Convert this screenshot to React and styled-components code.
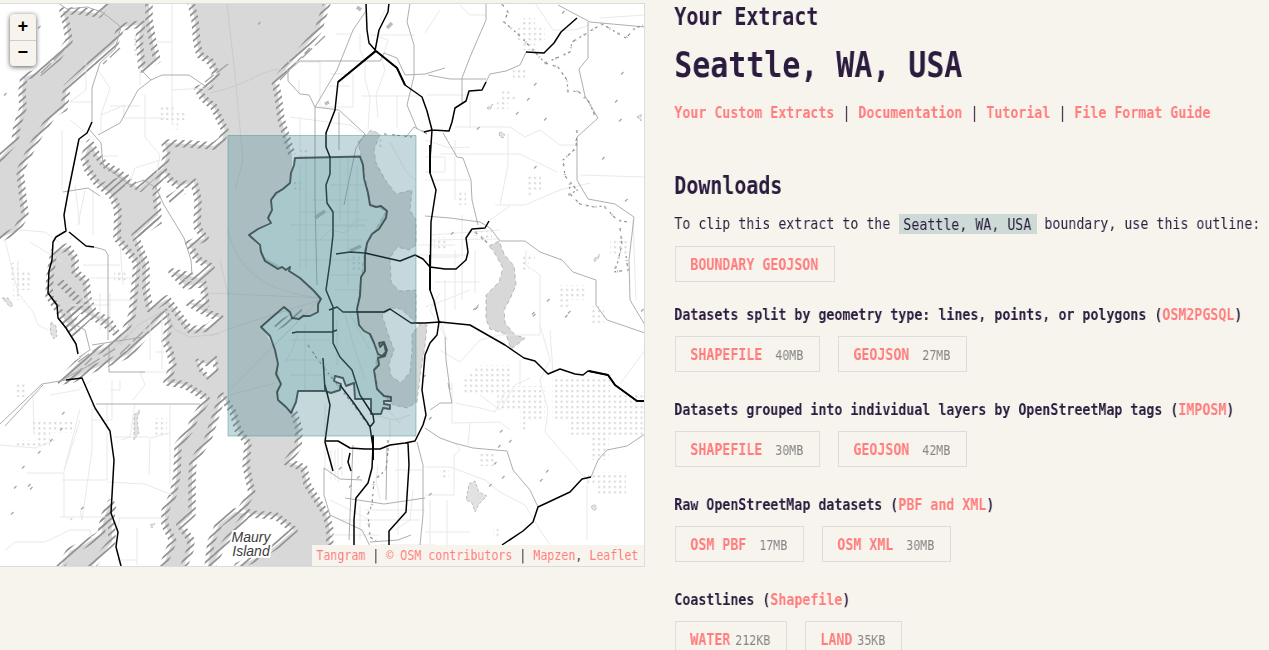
import React from 'react';
import styled, { createGlobalStyle } from 'styled-components';

const ink = '#2b1c3f';
const coral = '#ff7d7d';
const paper = '#f7f4ed';
const rule = '#dcdcdc';

const GlobalStyle = createGlobalStyle`
  html, body { margin: 0; height: 100%; overflow: hidden; }
  body { background: ${paper}; color: ${ink}; font-family: "DejaVu Sans Mono", "Liberation Mono", monospace; }
`;

/* Condensed monospace: every character is half an em wide. */
const Cell = styled.span`
  display: inline-block;
  vertical-align: baseline;
  white-space: pre;
  font-size: ${p => p.$size}px;
  width: ${p => (p.$chars * p.$size) / 2}px;
`;
const Squeeze = styled.span`
  display: inline-block;
  transform: translateX(-0.7px) scaleX(0.8306);
  transform-origin: 0 50%;
  will-change: transform;
`;
const Text = ({ size = 16, children, ...rest }) => (
  <Cell $size={size} $chars={children.length} {...rest}><Squeeze>{children}</Squeeze></Cell>
);

const Page = styled.main`
  display: grid;
  grid-template-columns: 645px 1fr;
  column-gap: 30px;
  height: 650px;
  overflow: hidden;
`;
const MapPanel = styled.section`
  position: relative;
  box-sizing: border-box;
  margin-top: 3px;
  width: 645px;
  height: 564px;
  border: 1px solid ${rule};
  border-left: 0;
  background: #fff;
  svg { display: block; }
`;
const ZoomBar = styled.div`
  position: absolute;
  top: 10px;
  left: 10px;
  width: 26px;
  border-radius: 4px;
  background: ${paper};
  box-shadow: 0 1px 5px rgba(0, 0, 0, 0.65);
`;
const ZoomButton = styled.button`
  display: block;
  width: 26px;
  height: 26px;
  padding: 0;
  border: 0;
  background: none;
  color: #000;
  font: bold 18px/26px "Liberation Mono", monospace;
  & + & { border-top: 1px solid #ccc; height: 26px; line-height: 25px; }
`;
const Attribution = styled.div`
  position: absolute;
  right: 0;
  bottom: 0;
  height: 21px;
  padding: 0 5px;
  line-height: 21px;
  font-size: 14px;
  white-space: nowrap;
  background: ${paper};
  color: #333;
  display: flex;
`;
const Link = styled.a`
  color: ${coral};
  text-decoration: none;
`;

const Details = styled.section`
  display: flex;
  flex-direction: column;
  align-items: flex-start;
  white-space: nowrap;
`;
const Eyebrow = styled.h4`margin: 0; height: 34px; font-size: 24px; line-height: 34px;`;
const Title = styled.h1`margin: 0; height: 62px; font-size: 36px; line-height: 62px;`;
const LinkRow = styled.nav`display: flex; height: 32px; line-height: 32px; font-size: 16px; margin-top: 1px; font-weight: bold;`;
const Divider = styled.span`font-weight: normal;`;
const SectionTitle = styled.h2`margin: 41px 0 0; height: 32px; line-height: 32px; font-size: 24px;`;
const Intro = styled.p`display: flex; align-items: center; margin: 12px 0 12px; height: 20px; line-height: 22px; font-size: 16px;`;
const Place = styled.span`display: inline-flex; height: 20px; padding: 0 5px; background: #cddad6;`;
const Group = styled.section`height: 95px;`;
const GroupTitle = styled.h5`display: flex; margin: 0 0 12px; height: 20px; line-height: 22px; font-size: 16px;`;
const First = styled.div`height: 58px;`;
const Buttons = styled.div`display: flex; gap: 18px;`;
const Button = styled.a`
  box-sizing: border-box;
  display: flex;
  gap: ${p => p.$gap || 0}px;
  height: 36px;
  padding: 0 15px;
  border: 1px solid ${rule};
  color: ${coral};
  font-weight: bold;
  line-height: 36px;
`;
const Size = styled.span`color: #868686; font-weight: normal;`;

/* ---- Map artwork ---- */
const WEST_SHORE = '190 -8L191 3 195 20 197 44 200 55 211 62 216 74 209 86 198 89 203 98 214 107 219 118 225 130 222 140 214 146 190 144 165 143 167 155 163 168 150 178 140 188 130 183 118 172 105 165 97 155 90 143 84 158 88 170 97 183 112 195 118 210 117 238 128 251 137 263 135 285 132 315 124 334 109 346 94 352 77 364 61 381 73 379 90 370 110 362 129 354 145 335 165 312 169 327 165 341 170 352 173 365 167 382 185 385 203 396 207 400 196 416 189 431 178 445 177 475 173 495 165 511 165 525 173 541 163 566 160 576';
const SOUTHEAST_SHORE = '329 576L329 566 330 530 326 514 317 500 307 484 304 468 291 463 287 462 298 447 299 430 294 412';
const SEATTLE_SHORE = '278 400 280 382 275 350 262 327 283 307 292 318 303 318 318 312 321 299 300 278 282 267 265 258 261 249 249 235 269 222 272 200 289 184 292 166';
const NORTHEAST_SHORE = '292 155L287 139 281 119 278 95 275 82 300 52 318 31 327 3 329 -8';
const SOUND = `M${WEST_SHORE}L${SOUTHEAST_SHORE}L${SEATTLE_SHORE}L${NORTHEAST_SHORE}Z`;
const BAINBRIDGE = 'M163 170L170 180 179 186 194 182 198 200 197 227 205 238 189 244 197 259 211 267 199 278 172 272 186 286 203 283 206 304 189 303 205 312 220 318 208 328 190 330 181 318 167 299 150 309 146 290 146 264 135 236 158 215 156 190Z';
const VASHON = 'M222 396L233 412 238 430 248 443 246 465 249 480 252 493 242 508 250 514 276 516 294 530 277 545 256 558 238 566 234 576 182 576 184 566 190 550 191 540 180 525 192 514 192 480 193 462 208 439Z';
const NORTHWEST = 'M63 11L67 27 69 41 58 57 40 72 24 77 22 91 23 108 17 126 15 141 0 158 -10 165 -10 241 0 238 16 231 25 215 22 190 20 171 34 143 53 114 64 108 67 87 91 64 115 43 121 27 142 24 139 38 142 69 157 60 153 43 149 20 149 -8 107 -8 107 3 99 14 82 11Z';
const DYES = 'M54 252L67 247 75 258 75 272 86 281 88 299 94 314 108 320 117 334 103 322 89 315 80 309 70 311 77 332 66 322 59 311 49 296 50 276Z';
const SOUTHWEST = 'M52 576L61 566 70 551 85 544 101 534 105 515 111 503 112 542 92 566 84 576Z';
const HARBOR = 'M207 576L211 542 219 524 235 512 247 514 235 530 220 550 212 566 210 576Z';
const LAKE = 'M358 142L371 130 380 134 374 150 376 163 386 181 396 194 412 190 410 210 416 220 416 245 409 250 397 247 390 258 391 282 399 291 416 290 416 323 410 317 401 309 392 308 382 315 388 334 394 350 389 364 391 376 401 383 410 372 412 352 412 334 420 324 427 325 425 346 421 370 417 402 407 408 393 405 378 390 375 369 378 350 370 335 359 325 357 309 361 278 365 248 386 211 370 204 366 178Z';
const SAMMAMISH = 'M489 246L499 241 504 254 514 266 516 285 510 299 504 310 505 323 515 335 525 338 518 344 511 349 506 334 490 329 486 319 486 295 499 282 503 268 494 252Z';
const SEATTLE = 'M295 158L360 156.500 363 165 364 178 368 193 370 205 376 207 381 206 387 211 386 218 379 229 372 234 367 243 365 255 365 271 361 277 360 296 357 309 359 325 364 331 370 334 374 343 378 354 382 356 386 352 384 343 380 347 379 343 384 342 387 350 385 356 378 358 379 365 374 370 377 389 384 396 391 397 391 401 384 401 384 404 390 405 390 409 383 408 381 414 371 414 371 399 355 399 354 383 346 386 343 378 335 376 334 381 341 384 340 390 331 393 325 391 298 391 296 402 291 413 286 407 278 400 277 392 281 384 276 374 278 364 275 350 270 336 261 327 270 319 284 307 290 312 292 318 299 319 303 316 310 316 318 312 318 304 321 299 314 291 300 278 289 271 290 267 286 270 282 267 278 269 265 261 261 252 260 245 249 235 258 229 271 223 268 218 272 210 271 200 276 193 283 189 290 183 291 173 294 165Z';

const HIGHWAYS = [
  'M92 122L87 133 79 139 68 193 64 215 66 231 56 237 53 242 52 260 49 271 48 293 57 305 58 318 66 328 76 344 78 354',
  'M69 232L86 246 94 247M66 380L82 378 95 408 110 431 114 460 111 513 118 532 116 547 121 566',
  'M389 3L388 12 379 30 375 51 338 82 335 110 326 133 326 147 330 157 330 174 326 185 327 203 333 212 333 235 330 262 326 290 333 307 333 343 340 357 352 370 360 395 373 415 374 422 370 427 373 447 372 468 368 483 356 498 354 520 354 545',
  'M366 3L367 30 369 43 376 51 397 68 405 85 422 97 427 111 432 130 430 160 430 173 436 190 431 222 430 290 434 301 439 322 437 335 430 343 425 355 422 390 426 415 423 425 415 441 405 443 390 445 380 449 365 449 350 448 338 441 326 441',
  'M329 310L337 307 343 312 384 312 390 309 411 323 425 323 440 322 470 325 505 345 524 358 535 361 548 374 560 369 575 374 583 375 588 371 608 375 615 385 637 401 645 401',
  'M336 254L350 252 365 253 400 261 415 255 423 259 430 267 445 269 456 269 466 260 468 252 466 238 472 229 485 228 489 221',
  'M432 130L449 131 452 122 455 108 466 101 469 91 482 90 486 82M526 52L544 53 554 43 561 32 577 18M424 132L432 130',
  'M408 443L409 465 406 512 389 531 389 545M325 385L330 405 325 442 333 471M350 453L348 462 351 471',
  'M502 545L523 531 533 522 538 507 570 492 582 479 591 477M340 385L353 402 367 422 370 427M292 333L297 332 332 332 337 330M323 358L325 390',
];
const ROADS = [
  'M58 3L67 9 87 7 102 12 121 27 115 49 100 63 92 88 92 122',
  'M141 70L151 80 162 75 189 75 205 86M151 80L138 90 120 123 98 135M89 129L101 143 103 165 130 185 144 180 156 188 164 205 184 238 191 260 192 275',
  'M0 424L42 384 66 380M5 426L43 385M96 404H200M94 247L105 250 108 255 108 340M92 345L143 337M109 346V372H145M63 192L88 188 100 196M60 381L90 365M76 325L85 330 90 350 79 357',
  'M366 11L353 30 337 70 315 107 315 200 317 285M288 71L300 61H380L384 53 397 58 405 75 425 74 445 68M315 107L339 110 365 134 356 148 347 190 344 205M339 112V150M288 71V81L300 94 309 95 315 107',
  'M410 3L407 22 414 45 414 76 407 105 417 129M406 137L414 127 427 134 422 130M428 75L450 79H486M486 3V20L470 57 462 78 462 103M486 82L490 74 506 71 520 65 526 52M558 5L590 22 645 27M588 22V58L579 69 585 96 598 118 577 137 577 180 588 199 615 204 634 217 629 260 630 300 645 325',
  'M443 133L457 157 463 158 471 180 472 200 478 225M425 216L450 218 480 222 490 228 500 241 525 241 540 252 562 260 573 272 596 280 596 305 607 320 645 333',
  'M425 428L440 438 454 443 473 448 507 451 513 470 530 490 538 507M591 477L598 460 607 450 627 446 645 434M417 442L423 465 423 515 420 545M353 445L349 540M370 546L362 530 330 515 324 495V468L340 479 362 480M387 445L386 500M345 498L384 504 425 498M370 542L398 540 411 535M448 383L452 403 440 403 430 410M445 337L446 360 450 390',
];
const FERRIES = 'M227 3L235 75 243 160 235 190M210 93Q235 88 255 77T290 71M228 230Q240 290 320 298M210 293L320 298M210 336L240 325 320 300M230 390L320 299M230 395L275 383M220 260L228 295M120 345L138 325 165 310 175 330 190 337 220 334';
const LOCAL = [
  'M172 3V125M86 60V90L70 102M62 130V192M70 120L95 140M98 70L110 88 101 115V132M110 106H140M124 105V118H165M140 85V68M145 95L145 137 160 155 157 172M101 115L125 105M101 156H118M70 102H92M157 42H172M172 90L207 88M160 160L135 168 130 182',
  'M30 242L62 262M5 240L18 293 33 312 38 325 48 330M18 293V260M20 230L45 232 60 243M75 185L78 210 80 225M93 190V235M85 190L78 225M83 265H120M90 278H135M100 293V330M110 293V330M80 300H132M70 305H110M120 245L123 285M150 320V360M162 315V370M155 352H165M140 372H167M140 372L145 385 133 400M120 380V390H110',
  'M112 380V420H92M107 404V480H62M92 404V450L82 520 80 510M107 482L145 484 172 495M170 405V485M149 437H114M60 517H107M121 440L130 437 135 404M170 433L150 438 149 475M27 473H64V517M0 445L35 448 55 440M80 409L64 471M5 550L15 542H45L70 530H90L92 540M137 528V565M117 560H137M50 395L78 390 92 380M33 395L34 435M64 471L80 420M120 518L117 530M118 518H170',
  'M360 34V50L365 61V80L370 97 368 130M374 35L388 40 382 60 385 70 376 95 378 118M290 117L350 125 362 133M299 80V94M288 62H320V106M336 34H350M353 75V107H320M362 96H420M397 95V128M330 74H353M329 86H350M370 35H415M385 10L380 20M300 117V150',
  'M300 165V270M306 158V270M348 158V285M300 212H360M290 225H365M296 240H362M310 200H360M330 185H368M300 260H360M330 275H361M335 290H358M337 320V365M345 315L355 350 365 380M350 314L370 350M290 340H330M285 360H325M290 375H335M305 325V390M297 335 292 350 285 363M340 158V220M357 165V230M333 226H365M320 240 330 230 345 233 357 220 367 220',
  'M390 142L405 170 415 180M418 245H455M418 255H470M430 240L500 239M445 280V325M455 250V310M462 215V300M435 282H480M430 235 500 230M425 257 460 257M440 293L430 310 447 340 440 320M440 350L460 362 480 340 500 335M475 250V293M425 307 445 300 470 290',
  'M425 33L440 10M460 5L470 15H486M427 95H470M425 140 450 148 470 147M440 154H520L557 172M455 127L510 127 525 137 540 130 560 145H575M508 133V165L500 205M470 128V90M495 205L525 205 560 190 590 183M580 175L645 177M535 3L553 30 575 30 590 25M600 18L645 15M425 180H470M425 157H445V172H425M455 140V200M510 206L490 220M526 250V265L540 275V335M500 335L540 335',
  'M540 325L550 360 540 380 548 410 545 432 565 455 582 475M582 475L587 478V540M425 467H450L485 480 500 492 525 505 540 530 550 545M452 383V423L500 422 510 430M470 423L468 445M455 443L460 450 454 455V495H425M447 500V545M425 532H470M430 500V545M480 395L500 410 515 385 530 378M455 403 480 408 495 412 505 392M520 360V385M550 330L553 373M620 384L645 350M633 220L636 300',
  'M325 405V470M338 448V482M342 448V476M331 450V480M335 450V480M374 415L395 420 410 415M390 420V440M383 405L400 423M378 465L376 480 380 500M330 500L370 520M340 520H420M330 535H380M398 445V535M360 505V540M395 470H422M365 510H425M380 545H435M395 530 410 520 413 490',
];
const WOODS = [
  'M160 105H174V113H187V120H178V130H173V120H160Z', 'M132 35H137V55H132Z', 'M10 263H18V270H33V290H20V300H13V280H10Z', 'M34 419H72V433H30V425Z', 'M15 440H35V431H50V447H15Z', 'M153 418H167V435H153Z', 'M204 473H218V481H204Z', 'M67 515H75V523H67Z',
  'M522 18H535V28H545V42H535V50H523V40H517V28H522Z', 'M513 70H525V79H513Z', 'M502 89H511V95H516V101H508V109H497V101H502Z', 'M526 176H541V190H533V198H526Z', 'M457 190H466V205H457Z', 'M434 237H448V251H434Z', 'M521 254H535V260H529V270H521Z', 'M560 285H586V300H571V309H558V298H560Z', 'M590 306H604V325H590Z', 'M610 241H630V255H610Z',
  'M478 365H510V386H545V420H525V430H520V410H497V395H462V380Z', 'M552 376H610V392H645V435H609V460H590V435H568V420H552Z', 'M588 472H626V494H598V485H588Z', 'M478 454H494V466H478Z', 'M440 468H449V478H440Z', 'M493 537H501V529H493Z', 'M472 231H492V241H480V236H472Z',
  'M114 270H126V282H114Z', 'M14 384H25V397H14Z', 'M300 148H308V157H300Z', 'M293 181H301V190H293Z', 'M378 139H384V150H378Z', 'M350 250H362V272H350Z',
];
const PONDS = 'M51 322L56 326 57 336 54 339 50 332ZM2 298L8 298 13 305 10 307ZM469 484L475 481 479 492 487 496 479 504 475 512 472 503 466 500ZM499 133L502 132 505 135 503 138 500 137ZM591 507L594 504 597 508 594 511ZM150 525L155 523 152 528ZM473 310L479 304 477 309ZM594 259L600 254 598 259 594 262ZM637 117L641 114 641 121ZM487 108L493 104 490 110ZM134 415L140 410 137 420 139 433 134 440Z';
const CREEKS = [
  'M502 4L508 12 504 22 520 36 533 50 545 63 552 60 570 52 572 42 602 24 626 38 635 28 645 25',
  'M545 63L558 67 567 80 568 92 578 91 589 102 596 118', 'M577 130L576 148 563 160 565 176 577 190 569 195 570 183',
  'M570 194L580 204 594 207 604 206 617 220 627 222M620 228L622 244 617 265 613 272 628 270 626 256',
  'M475 232L490 245M384 134L395 135 412 137', 'M388 440L388 450 386 470 374 480 372 505 368 514 370 537 376 541', 'M308 345L318 360 332 378 356 408 368 425',
];
const RIDGES = [
  [61, 429], [51, 440], [23, 467], [15, 487], [29, 485], [31, 488], [12, 513], [82, 508], [63, 413], [39, 452], [5, 94], [39, 27], [259, 23],
  [535, 84], [528, 99], [517, 113], [545, 119], [478, 128], [622, 73], [616, 101], [626, 200], [620, 120], [603, 158], [535, 167], [452, 233], [476, 308], [534, 315], [533, 313], [548, 300], [569, 312], [566, 316],
  [501, 431], [510, 441], [499, 446], [495, 463], [490, 485], [503, 477], [547, 471], [541, 480], [430, 494], [340, 468], [358, 477], [350, 486], [430, 418], [424, 376], [642, 310], [563, 12],
];
const HATCHED = [`M${WEST_SHORE}`, `M${SOUTHEAST_SHORE}`, `M${NORTHEAST_SHORE}`, BAINBRIDGE, VASHON, NORTHWEST, DYES, SOUTHWEST, HARBOR];

const CityMap = () => (
  <svg width="644" height="562" viewBox="0 4 644 562" fill="none" strokeLinejoin="round">
    <defs>
      <pattern id="teeth" width="8" height="7" patternUnits="userSpaceOnUse">
        <path d="M-2 8.750L10 -1.750M-2 1.750L2 -1.750M6 8.750L10 5.250" stroke="#939393" strokeWidth="1.700" />
      </pattern>
      <pattern id="dots" width="5.330" height="5.330" patternUnits="userSpaceOnUse">
        <rect x="1" y="1" width="2" height="2" fill="#d6d6d6" />
      </pattern>
    </defs>
    <rect y="3" width="645" height="564" fill="#fff" />
    {WOODS.map(d => <path key={d} d={d} fill="url(#dots)" />)}
    <path d={SOUND} fill="#d8d8d8" />
    <path d={BAINBRIDGE} fill="#fff" />
    <path d={VASHON} fill="#fff" />
    <path d="M198 361L207 364 215 358 216 371 209 378 201 370Z" fill="#fff" stroke="url(#teeth)" strokeWidth="5" />
    {[NORTHWEST, DYES, SOUTHWEST, HARBOR].map(d => <path key={d} d={d} fill="#d8d8d8" />)}
    {HATCHED.map(d => <path key={d} d={d} stroke="url(#teeth)" strokeWidth="7.500" />)}
    <path d="M104 186L130 178M109 193L125 184M168 200L184 190M58 280L88 310M65 328L84 302M70 334L91 314M137 235L160 220M100 530L113 505M275 327L303 312" stroke="url(#teeth)" strokeWidth="8" />
    <path d="M78 362L100 346M88 366L118 347M120 354L158 317M120 48L103 64M41 73L68 46M228 64L205 82M280 80L310 48M302 58L325 36M72 378L92 358" stroke="#a2a2a2" strokeWidth="1.300" strokeDasharray="14 4" />
    <path d={LAKE} fill="#d8d8d8" />
    <path d={LAKE} stroke="#aaa" strokeWidth=".7" strokeDasharray="4 3" />
    <path d={SAMMAMISH} fill="#d8d8d8" stroke="#aaa" strokeWidth=".8" strokeDasharray="4 3" />
    <path d={PONDS} fill="#e2e2e2" stroke="#aaa" strokeWidth=".7" strokeDasharray="3 2" />
    <path d={FERRIES} stroke="#c6c6c6" strokeWidth=".8" />
    <path d={LOCAL.join('')} stroke="#e6e6e6" strokeWidth=".9" />
    <path d={ROADS.join('')} stroke="#a5a5a5" strokeWidth=".9" />
    {CREEKS.map(d => (
      <g key={d}>
        <path d={d} stroke="#8c8c8c" strokeWidth="1.200" strokeDasharray="3 5 2 3" />
        <path d={d} stroke="#bbb" strokeWidth="2.500" strokeDasharray="1 9" />
      </g>
    ))}
    {RIDGES.map(([x, y]) => <path key={`${x}-${y}`} d={`M${x - 1} ${y + 1.5}l2.500-2.500`} stroke="#a6a6a6" strokeWidth="1.300" />)}
    <path d="M357 7L361 10M387 28L392 23M325 104L329 102M315 218L325 211M350 251L361 246" stroke="#bcbcbc" strokeWidth="3.500" />
    <path d={HIGHWAYS.join('')} stroke="#000" strokeWidth="1.500" />
    <path d="M376 51L338 82M430 145V173M430 255V290M376 51L397 68 405 85M589 371L608 375 615 385 637 401 645 401M373 435V460" stroke="#000" strokeWidth="1.900" />
    <rect x="228" y="135.500" width="188" height="300.500" fill="#44848e" fillOpacity=".31" stroke="#3e9699" strokeOpacity=".48" />
    <path d={SEATTLE} fill="#599998" fillOpacity=".25" />
    <path d={SEATTLE} stroke="#1e3034" strokeOpacity=".72" strokeWidth="1.900" />
    <g fontFamily='"Liberation Sans", Arial, sans-serif' fontStyle="italic" fontSize="14" fill="#3c3c3c" stroke="#fff" strokeWidth="4" paintOrder="stroke" textAnchor="middle">
      <text x="251" y="542">Maury</text>
      <text x="251" y="556">Island</text>
    </g>
  </svg>
);

const Download = ({ label, size, tight }) => (
  <Button $gap={tight ? 5 : 13}>
    <Text>{label}</Text>
    {size && <Size><Text size={14}>{size}</Text></Size>}
  </Button>
);

const GROUPS = [
  { title: 'Datasets split by geometry type: lines, points, or polygons (', link: 'OSM2PGSQL', files: [['SHAPEFILE', '40MB'], ['GEOJSON', '27MB']] },
  { title: 'Datasets grouped into individual layers by OpenStreetMap tags (', link: 'IMPOSM', files: [['SHAPEFILE', '30MB'], ['GEOJSON', '42MB']] },
  { title: 'Raw OpenStreetMap datasets (', link: 'PBF and XML', files: [['OSM PBF', '17MB'], ['OSM XML', '30MB']] },
  { title: 'Coastlines (', link: 'Shapefile', files: [['WATER', '212KB'], ['LAND', '35KB']], tight: true },
];
const NAV = ['Your Custom Extracts', 'Documentation', 'Tutorial', 'File Format Guide'];

export default function App() {
  return (
    <>
      <GlobalStyle />
      <Page>
        <MapPanel>
          <CityMap />
          <ZoomBar><ZoomButton>+</ZoomButton><ZoomButton>−</ZoomButton></ZoomBar>
          <Attribution>
            <Link><Text size={14}>Tangram</Text></Link><Text size={14}>{' | '}</Text>
            <Link><Text size={14}>© OSM contributors</Text></Link><Text size={14}>{' | '}</Text>
            <Link><Text size={14}>Mapzen</Text></Link><Text size={14}>{', '}</Text>
            <Link><Text size={14}>Leaflet</Text></Link>
          </Attribution>
        </MapPanel>
        <Details>
          <Eyebrow><Text size={24}>Your Extract</Text></Eyebrow>
          <Title><Text size={36}>Seattle, WA, USA</Text></Title>
          <LinkRow>
            {NAV.map((name, i) => (
              <React.Fragment key={name}>
                {i > 0 && <Divider><Text>{' | '}</Text></Divider>}
                <Link><Text>{name}</Text></Link>
              </React.Fragment>
            ))}
          </LinkRow>
          <SectionTitle><Text size={24}>Downloads</Text></SectionTitle>
          <Intro>
            <Text>{'To clip this extract to the '}</Text>
            <Place><Text>Seattle, WA, USA</Text></Place>
            <Text>{' boundary, use this outline:'}</Text>
          </Intro>
          <First><Buttons><Download label="BOUNDARY GEOJSON" /></Buttons></First>
          {GROUPS.map(g => (
            <Group key={g.link}>
              <GroupTitle><Text>{g.title}</Text><Link><Text>{g.link}</Text></Link><Text>)</Text></GroupTitle>
              <Buttons>{g.files.map(([label, size]) => <Download key={label} label={label} size={size} tight={g.tight} />)}</Buttons>
            </Group>
          ))}
        </Details>
      </Page>
    </>
  );
}
